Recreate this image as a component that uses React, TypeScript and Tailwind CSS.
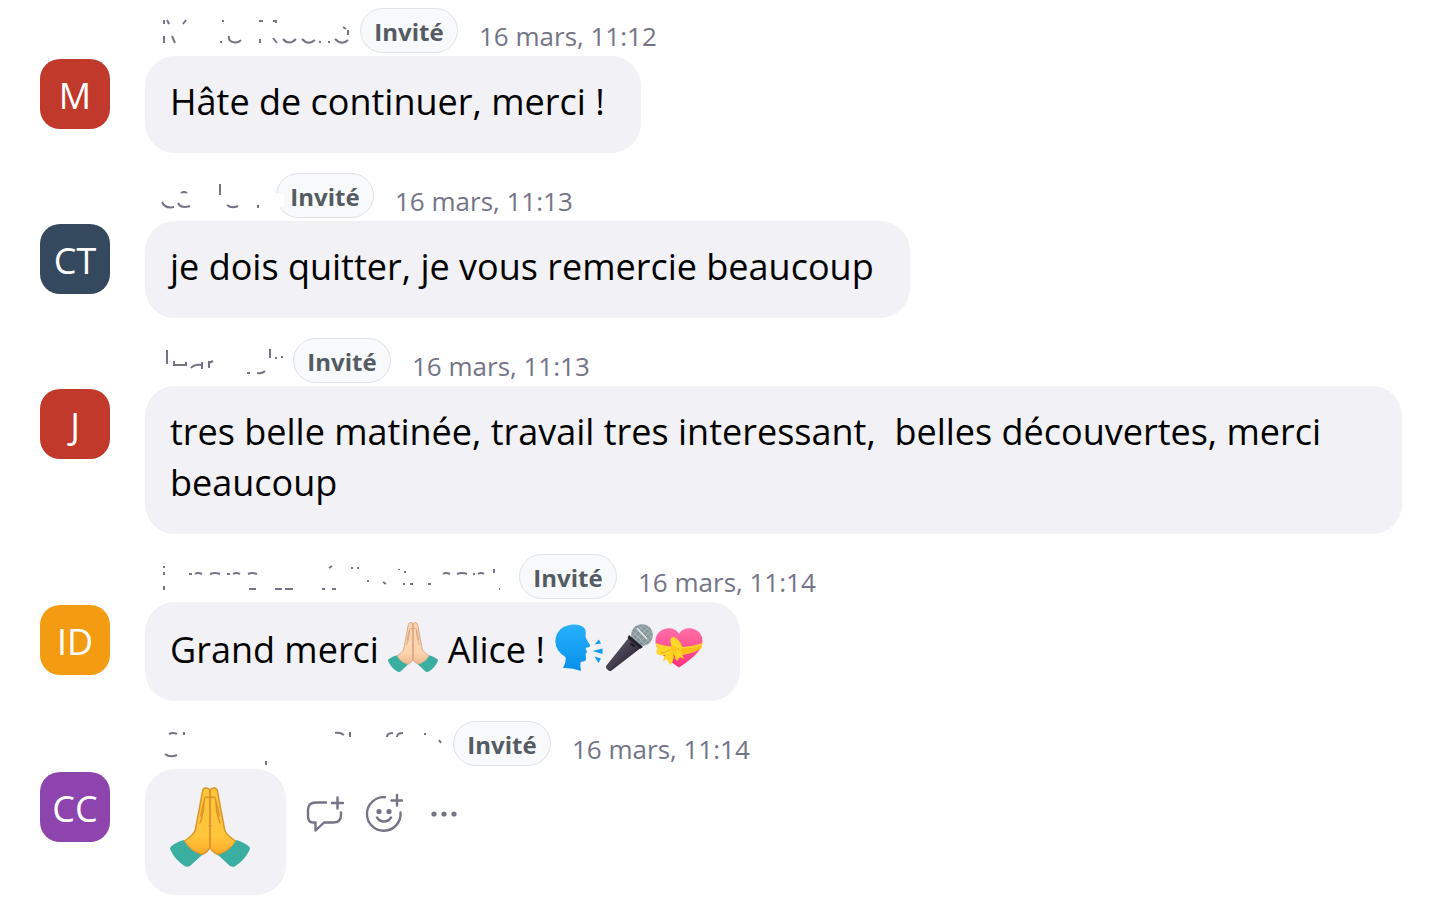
import type { ReactNode } from "react";

type Message = {
  initials: string;
  color: string;
  time: string;
  nameWidth: number;
  nameMarks: string;
  clipped?: boolean;
  body: ReactNode;
  emojiOnly?: boolean;
};

function PrayingHands({ light, className }: { light?: boolean; className: string }) {
  const skin = light ? "#fcd5b0" : "#ffc63c";
  const shade = light ? "#ecb88f" : "#ffa928";
  const line = light ? "#d3a67f" : "#dc952b";
  const id = light ? "hands-light" : "hands-yellow";
  const half = (
    <>
      <path
        d="M40 3Q39 .8 36 .9Q33 1 32.6 4L25.500 42Q25 46 21 49L14 54.500Q21 65 32 67.500Q38 65 40 60Z"
        fill={`url(#${id})`}
        stroke={line}
        strokeWidth="1.500"
        strokeLinejoin="round"
      />
      <path
        d="M40 12Q39 9.800 36.500 10Q34.500 10.200 34.300 13L33.500 23Q32 31 30 36M34.300 13Q32 21 30.700 29"
        fill="none"
        stroke={line}
        strokeWidth="1.400"
        strokeLinecap="round"
      />
      <path
        d="M13.500 53Q6 55 1 59.500Q-.5 61 .5 63Q5 73 15 79.300Q17.500 80.500 20 79L32 68Q20 65 13.500 53Z"
        fill="#3aafa1"
      />
    </>
  );
  return (
    <svg viewBox="0 0 80 80" className={className} aria-hidden="true">
      <defs>
        <linearGradient id={id} x1="0" y1="0" x2="0" y2="1">
          <stop offset=".72" stopColor={skin} />
          <stop offset="1" stopColor={shade} />
        </linearGradient>
      </defs>
      {half}
      <g transform="translate(80 0) scale(-1 1)">{half}</g>
      <path d="M40 3V61M38.800 39.500L40 37.500L41.200 39.500" stroke={line} strokeWidth="1.600" fill="none" />
    </svg>
  );
}

function SpeakingHead() {
  return (
    <svg viewBox="0 0 50 50" className="inline-block size-[50px] align-[-9px]" aria-hidden="true">
      <defs>
        <linearGradient id="head" x1="0" y1="0" x2="0" y2="1">
          <stop stopColor="#29b1ff" />
          <stop offset="1" stopColor="#0590e8" />
        </linearGradient>
      </defs>
      <path
        d="M19 2.500C25 2.300 29 4 31 7Q32.500 10 31.500 14Q32 17 35.500 22Q37 24 35 25L31.500 26L33 30L31.500 32.500L32 36Q32.500 39 29 39.500L26.500 40Q26 44 27 49Q18 45.500 9 46Q12.500 39 11.500 35Q1.500 29 1.300 19.500C1.500 9 9 3 19 2.500Z"
        fill="url(#head)"
      />
      <path d="M40.500 22.500L45 17.500L47 21.500ZM38.500 29L48.500 26.500V32ZM40.500 34.500L47 36.500L44.500 41Z" fill="#109bf0" />
    </svg>
  );
}

function Microphone() {
  return (
    <svg viewBox="0 0 50 50" className="inline-block size-[50px] align-[-9px]" aria-hidden="true">
      <defs>
        <linearGradient id="mic-body" x1="0" y1="0" x2="1" y2="1">
          <stop offset=".35" stopColor="#514c5b" />
          <stop offset=".7" stopColor="#302c3b" />
        </linearGradient>
      </defs>
      <path d="M2 44L24.500 16L36 26.500L7 49Q5 49.500 3.500 47.500Q1.500 46 2 44Z" fill="url(#mic-body)" />
      <circle cx="38" cy="13" r="10.800" fill="#87979c" />
      <path d="M30 5.500L46 20M34 3L48 16M38 2.500L48 11M28 9L42 23M27.500 14L36 23M28 15L40 3M30 19L45 5M34 22L48 8M38 24L48.500 13" stroke="#a9b5b8" strokeWidth="1" />
      <path d="M33 6L43 17" stroke="#dfe7e9" strokeWidth="1.500" />
      <path d="M25 13L39 25L36 27L23.500 16Z" fill="#24212c" />
      <path d="M27 22L30 24" stroke="#16141c" strokeWidth="2" strokeLinecap="round" />
    </svg>
  );
}

function GiftHeart() {
  return (
    <svg viewBox="0 0 50 50" className="inline-block size-[50px] align-[-9px]" aria-hidden="true">
      <defs>
        <linearGradient id="heart" x1="0" y1="0" x2="0" y2="1">
          <stop stopColor="#ff70a9" />
          <stop offset="1" stopColor="#ff2f7d" />
        </linearGradient>
      </defs>
      <path
        d="M25 12C28 6 36 4.500 42 8C50 12.500 50.500 22 44 30Q38 37 25 45.500Q12 37 6 30C-.5 22 0 12.500 8 8C14 4.500 22 6 25 12Z"
        fill="url(#heart)"
      />
      <path d="M1.500 21Q13 25 25 25Q37 25 48.500 21L47 26.500Q36 33 25 33Q12 33 3.500 27.500Z" fill="#fed431" />
      <path d="M25 25Q36 28 48 23L47 26.500Q37 32 27 32Z" fill="#ffbd16" />
      <path d="M15 27Q10 34 9 39L13 37L16 43L19 39Q20 34 20 29ZM20 28Q20 36 23 39L26 35L30 37Q27 29 23 25Z" fill="#ffd51f" />
      <path d="M18 26Q14 14 20 15Q26 18 28 24Q29 29 24 29Q29 30 27 34L18 29Q9 36 3 32Q1 29 4 27Q10 24 18 26Z" fill="#ffd829" />
      <path d="M17 24L23 25L22 30L17 29Z" fill="#ffc21c" />
      <path d="M16 28Q10 31 7 31M20 30L19 36M24 26L25 28" stroke="#eea914" strokeWidth="1" fill="none" />
    </svg>
  );
}

function MessageActions() {
  return (
    <div className="mt-5 ml-3.5 flex h-[50px] items-center gap-[9px] text-[#747487]">
      <button type="button" aria-label="Répondre" className="flex size-[50px] items-center justify-center">
        <svg width="44" height="44" viewBox="0 0 44 44" fill="none" stroke="currentColor" strokeWidth="2.400" strokeLinecap="round" strokeLinejoin="round">
          <path d="M23 10.500H13Q5 10.500 5 18V24Q5 30.500 10 30.500H12.500V38.500L21 30.500H30Q38 30.500 38 23V20.500" />
          <path d="M34.500 5.500V16.500M29 11H40" />
        </svg>
      </button>
      <button type="button" aria-label="Réagir" className="flex size-[50px] items-center justify-center">
        <svg width="44" height="44" viewBox="0 0 44 44" fill="none" stroke="currentColor" strokeWidth="2.400" strokeLinecap="round">
          <path d="M23 5.200A16.800 16.800 0 1 0 38.500 20.500" />
          <path d="M15 25.500Q17.500 29.500 22 29.500T29 25.500M35 3V13.500M29.500 8.500H40" />
          <circle cx="17" cy="19.500" r="2.600" fill="currentColor" stroke="none" />
          <circle cx="27" cy="19.500" r="2.600" fill="currentColor" stroke="none" />
        </svg>
      </button>
      <button type="button" aria-label="Plus" className="flex size-[50px] items-center justify-center">
        <svg width="44" height="44" viewBox="0 0 44 44" fill="currentColor">
          <circle cx="13" cy="22" r="2.600" />
          <circle cx="23" cy="22" r="2.600" />
          <circle cx="33" cy="22" r="2.600" />
        </svg>
      </button>
    </div>
  );
}

// nameMarks are the leftover strokes of the wiped sender names
const MESSAGES: Message[] = [
  {
    initials: "M",
    color: "bg-[#c0392b]",
    time: "16 mars, 11:12",
    nameWidth: 215,
    nameMarks:
      "M19 12V16M22 12L24 16M41 12L38 16M19 28V35M27 28L30 35M77 13H79M76 33V35M84 28Q83 34 90 34.500Q94 34.500 96 32M114 13H118M128 13H132M131 13V15M115 31V35M128 30L132 35M138 31Q144 38 151 31M157 31Q163 38 170 32M175 33V35M184 33V35M190 31Q197 38 203 32M203 22V27M198 19L201 21",
    body: "Hâte de continuer, merci !",
  },
  {
    initials: "CT",
    color: "bg-[#34495e]",
    time: "16 mars, 11:13",
    nameWidth: 131,
    nameMarks: "M17 29Q20 36 29 34M33 30Q36 36 45 33M36 20Q39 18 42 20M75 11V22M82 32Q87 36 93 33M113 32V35",
    clipped: true,
    body: "je dois quitter, je vous remercie beaucoup",
  },
  {
    initials: "J",
    color: "bg-[#c0392b]",
    time: "16 mars, 11:13",
    nameWidth: 148,
    nameMarks: "M22 12V26M29 23V27H41V24M46 30Q49 26 57 27M57 24V31M64 23V30M64 25L68 23M102 35H105M112 35Q117 36 120 33M125 11V20M130 20H132M136 19H138",
    body: "tres belle matinée, travail tres interessant,  belles découvertes, merci beaucoup",
  },
  {
    initials: "ID",
    color: "bg-[#f39c12]",
    time: "16 mars, 11:14",
    nameWidth: 374,
    nameMarks:
      "M19 12V14M19 18V21M19 32V36M44 20H47M50 20Q53 18 57 20M65 20Q70 18 75 20M82 20H85M88 20Q91 18 95 20M103 20Q107 18 112 20M104 35H111M130 35H137M140 35H148M177 35H180M187 35H191M184 14L187 12M206 14H208M212 14H214M222 27H224M238 28L241 30M254 15V16M260 17V19M258 30H260M265 30H268M283 30H286M298 20Q301 18 305 20M312 20Q317 18 322 20M328 20H330M333 20Q336 18 339 20M349 15V19M354 35H355",
    body: (
      <>
        Grand merci <PrayingHands light className="inline-block size-[50px] align-[-9px]" /> Alice !{" "}
        <span className="whitespace-nowrap">
          <SpeakingHead />
          <Microphone />
          <GiftHeart />
        </span>
      </>
    ),
  },
  {
    initials: "CC",
    color: "bg-[#8e44ad]",
    time: "16 mars, 11:14",
    nameWidth: 308,
    nameMarks: "M24 13Q28 11 32 13M39 11V14M20 33Q25 37 32 34M121 40V44M190 12Q195 11 199 14M205 11V16M242 16Q242 12 248 12M252 16Q252 12 258 12M279 13H281M294 19L296 22",
    body: <PrayingHands className="block size-20" />,
    emojiOnly: true,
  },
];

export default function App() {
  return (
    <main className="flex min-h-screen flex-col gap-5 bg-white px-7 pt-2 pb-3 font-['Open_Sans',sans-serif]">
      {MESSAGES.map((message, index) => (
        <article key={index} className="flex items-start gap-[35px] pl-3">
          <div
            className={`mt-[51px] flex size-[70px] shrink-0 items-center justify-center rounded-[20px] pt-1 text-[36px] text-white ${message.color}`}
          >
            {message.initials}
          </div>
          <div className="min-w-0 flex-1">
            <header className="flex h-12 items-start">
              <svg
                width={message.nameWidth}
                height="48"
                fill="none"
                stroke="#747487"
                strokeWidth="2"
                className="shrink-0"
                aria-hidden="true"
              >
                <path d={message.nameMarks} />
              </svg>
              <span className="relative flex h-[45px] w-[98px] shrink-0 items-center justify-center rounded-full border border-[#dfe3e8] bg-[#f7f9fa] pt-0.5 text-[24px] font-bold text-[#555b62]">
                {message.clipped ? <i className="absolute top-[19px] -left-px h-[14px] w-2 rounded-r bg-white" /> : null}
                Invité
              </span>
              <time className="ml-[21px] pt-2 text-[26px] leading-[40px] whitespace-nowrap text-[#747487]">
                {message.time}
              </time>
            </header>
            <div className="flex items-start">
              <div
                className={`rounded-[30px] bg-[#f2f1f6] pr-9 pl-[25px] text-[36px] leading-[51px] whitespace-pre-wrap text-black ${message.emojiOnly ? "pt-[18px] pb-7" : "pt-5 pb-[26px]"}`}
              >
                {message.body}
              </div>
              {message.emojiOnly ? <MessageActions /> : null}
            </div>
          </div>
        </article>
      ))}
    </main>
  );
}
